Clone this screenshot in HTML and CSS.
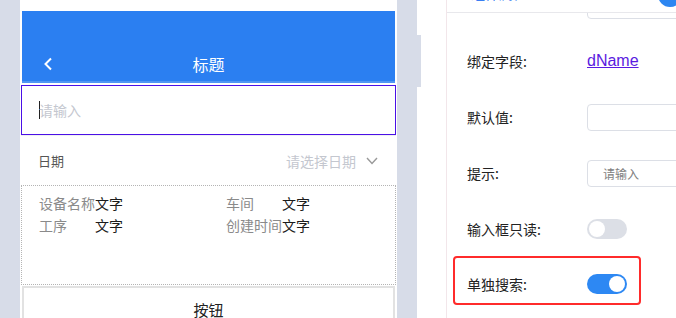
FILE: index.html
```html
<!DOCTYPE html>
<html lang="zh-CN">
<head>
<meta charset="utf-8">
<title>表单设计</title>
<link rel="stylesheet" href="styles.css">
</head>
<body>
<div class="screen">
  <div class="gutter"></div>
  <div class="phone">
    <div class="nav">
      <svg class="back" width="10" height="14" viewBox="0 0 10 14"><path d="M8 1.5 L2.5 7 L8 12.5" fill="none" stroke="#fff" stroke-width="2"/></svg>
      <span class="nav-title">标题</span>
    </div>
    <div class="text-input"><span class="caret"></span><span class="ph">请输入</span></div>
    <div class="date-row">
      <span class="date-label">日期</span>
      <span class="date-pick">请选择日期
        <svg class="chev" width="12" height="8" viewBox="0 0 12 8"><path d="M1 1 L6 6.5 L11 1" fill="none" stroke="#999" stroke-width="1.4"/></svg>
      </span>
    </div>
    <div class="info-box">
      <div class="info-grid">
        <div class="info-item"><span class="k">设备名称</span><span class="v">文字</span></div>
        <div class="info-item"><span class="k">车间</span><span class="v">文字</span></div>
        <div class="info-item"><span class="k">工序</span><span class="v">文字</span></div>
        <div class="info-item"><span class="k">创建时间</span><span class="v">文字</span></div>
      </div>
    </div>
    <div class="btn-box">按钮</div>
  </div>
  <div class="gap"></div>
  <div class="spacer"><div class="tab"></div></div>
  <div class="panel">
    <div class="panel-head">
      <span class="head-text">组件属性</span>
      <span class="head-dot"></span>
    </div>
    <div class="panel-body">
      <div class="row"><span class="lbl"></span><div class="field"></div></div>
      <div class="row"><span class="lbl">绑定字段:</span><a class="link" href="#">dName</a></div>
      <div class="row"><span class="lbl">默认值:</span><div class="field"></div></div>
      <div class="row"><span class="lbl">提示:</span><div class="field"><span class="fph">请输入</span></div></div>
      <div class="row"><span class="lbl">输入框只读:</span><span class="switch"><span class="knob"></span></span></div>
      <div class="row hl"><span class="lbl">单独搜索:</span><span class="switch on"><span class="knob"></span></span></div>
    </div>
  </div>
</div>
</body>
</html>
```
FILE: styles.css
```css
* { box-sizing: border-box; }
html, body { margin: 0; padding: 0; }
body {
  width: 676px;
  height: 318px;
  overflow: hidden;
  background: #d7dce8;
  font-family: "Noto Sans CJK SC", "Noto Sans", sans-serif;
}
.screen {
  display: flex;
  height: 318px;
}
.gutter { width: 20px; flex: none; }
.phone {
  width: 377px;
  flex: none;
  background: #fff;
  padding-top: 11px;
  display: flex;
  flex-direction: column;
  overflow: hidden;
}
.phone > * { flex-shrink: 0; }
.nav {
  margin: 0 2px;
  height: 72px;
  background: #2b7ff1;
  border-bottom: 2px solid #4f96f3;
  display: flex;
  align-items: center;
  padding: 41px 0 5px 21px;
}
.back { display: block; }
.nav-title {
  flex: 1;
  text-align: center;
  color: #fff;
  font-size: 16px;
  line-height: 24px;
  margin-left: -31px;
}
.text-input {
  margin: 2px 1px 0 1px;
  height: 50px;
  border: 1px solid #4a10e6;
  display: flex;
  align-items: center;
  padding-left: 17px;
}
.caret {
  width: 1px;
  height: 18px;
  background: #222;
  margin-right: -1px;
}
.ph { color: #c4c7cf; font-size: 14px; line-height: 20px; }
.date-row {
  margin: 0 1px;
  border-top: 1px solid #f0f0f2;
  height: 50px;
  display: flex;
  align-items: center;
  justify-content: space-between;
  padding: 0 18px 0 17px;
}
.date-label { font-size: 13px; color: #555; }
.date-pick {
  font-size: 14px;
  color: #c4c7cf;
  display: flex;
  align-items: center;
  gap: 10px;
}
.info-box {
  margin: 0 1px;
  height: 100px;
  border: 1px dotted #b4b4b4;
  padding: 6px 0 0 17px;
}
.info-grid {
  display: grid;
  grid-template-columns: 187px 187px;
}
.info-item {
  display: flex;
  font-size: 14px;
  line-height: 22px;
  height: 22px;
}
.info-item .k { width: 56px; color: #8a8a8a; white-space: nowrap; }
.info-item .v { color: #1b1b1b; }
.btn-box {
  margin: 1px 2px 0 2px;
  height: 60px;
  border: 2px solid #e2e2e2;
  border-bottom: none;
  text-align: center;
  font-size: 15px;
  line-height: 44px;
  color: #222;
}
.gap { width: 20px; flex: none; }
.spacer {
  width: 29px;
  flex: none;
  background: #fff;
}
.tab {
  width: 4px;
  height: 52px;
  margin-top: 35px;
  background: #d7dce8;
}
.panel {
  width: 230px;
  flex: none;
  background: #fff;
  border-left: 1px solid #f2e6ea;
  overflow: hidden;
  display: flex;
  flex-direction: column;
}
.panel-head {
  height: 13px;
  border-bottom: 1px solid #e8e8ec;
  position: relative;
  z-index: 1;
  background: #fff;
  flex: none;
  overflow: hidden;
}
.head-text {
  position: absolute;
  left: 24px;
  top: -17px;
  font-size: 14px;
  line-height: 20px;
  color: #3a7ef2;
}
.head-dot {
  position: absolute;
  left: 211px;
  top: -17px;
  width: 24px;
  height: 24px;
  border-radius: 50%;
  background: #2d86f1;
}
.panel-body {
  margin-top: -36px;
  padding-left: 20px;
}
.row {
  height: 56px;
  display: flex;
  align-items: center;
}
.lbl {
  width: 120px;
  flex: none;
  font-size: 14px;
  color: #222;
}
.field {
  width: 140px;
  flex: none;
  height: 27px;
  border: 1px solid #dcdfe6;
  border-radius: 4px;
  display: flex;
  align-items: center;
  padding-left: 15px;
}
.fph { font-size: 12px; color: #808080; }
.link {
  font-family: "Liberation Sans", Arial, sans-serif;
  font-size: 16px;
  color: #5a1be0;
  text-decoration: underline;
}
.switch {
  width: 40px;
  height: 20px;
  border-radius: 10px;
  background: #dcdfe6;
  display: flex;
  align-items: center;
  padding: 0 2px;
}
.switch .knob {
  width: 16px;
  height: 16px;
  border-radius: 50%;
  background: #fff;
}
.switch.on {
  background: #2d88f3;
  justify-content: flex-end;
}
.row.hl {
  margin: -1px 0 0 -14px;
  width: 188px;
  height: 49px;
  border: 2px solid #ff2b2b;
  border-radius: 4px;
  padding: 7px 0 0 12px;
}
```
